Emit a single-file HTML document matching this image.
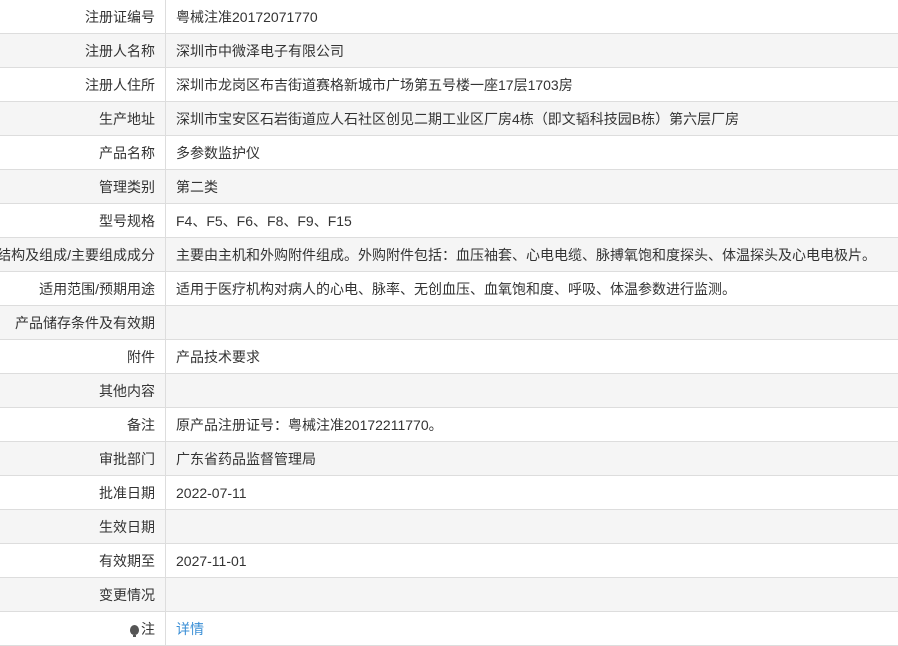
<!DOCTYPE html>
<html><head><meta charset="utf-8"><style>
body{margin:0;width:898px;height:645px;overflow:hidden;background:#fff;font-family:"Liberation Sans","Noto Sans CJK SC",sans-serif;font-size:14px;color:#333}
.t{position:absolute;top:0;left:0;width:898px}
.r{display:flex;height:33px;border-bottom:1px solid #ddd;line-height:35px}
.r:nth-child(even){background:#f5f5f5}
.l{width:166px;border-right:1px solid #ddd;box-sizing:border-box;padding-right:10px;display:flex;justify-content:flex-end;overflow:hidden;white-space:nowrap}
.v{padding-left:10px;white-space:nowrap;overflow:hidden}
a{color:#3b8fd6;text-decoration:none}
.b{display:inline-block;width:9px;height:10px;border-radius:50% 50% 45% 45%;background:#555;margin-right:2px;vertical-align:-1px;position:relative}
.b:after{content:"";position:absolute;left:3px;top:10px;width:3px;height:2px;background:#555}
</style></head><body><div class="t">
<div class="r"><div class="l">注册证编号</div><div class="v">粤械注准20172071770</div></div>
<div class="r"><div class="l">注册人名称</div><div class="v">深圳市中微泽电子有限公司</div></div>
<div class="r"><div class="l">注册人住所</div><div class="v">深圳市龙岗区布吉街道赛格新城市广场第五号楼一座17层1703房</div></div>
<div class="r"><div class="l">生产地址</div><div class="v">深圳市宝安区石岩街道应人石社区创见二期工业区厂房4栋（即文韬科技园B栋）第六层厂房</div></div>
<div class="r"><div class="l">产品名称</div><div class="v">多参数监护仪</div></div>
<div class="r"><div class="l">管理类别</div><div class="v">第二类</div></div>
<div class="r"><div class="l">型号规格</div><div class="v">F4、F5、F6、F8、F9、F15</div></div>
<div class="r"><div class="l"><span>结构及组成/主要组成成分</span></div><div class="v">主要由主机和外购附件组成。外购附件包括：血压袖套、心电电缆、脉搏氧饱和度探头、体温探头及心电电极片。</div></div>
<div class="r"><div class="l">适用范围/预期用途</div><div class="v">适用于医疗机构对病人的心电、脉率、无创血压、血氧饱和度、呼吸、体温参数进行监测。</div></div>
<div class="r"><div class="l">产品储存条件及有效期</div><div class="v"></div></div>
<div class="r"><div class="l">附件</div><div class="v">产品技术要求</div></div>
<div class="r"><div class="l">其他内容</div><div class="v"></div></div>
<div class="r"><div class="l">备注</div><div class="v">原产品注册证号：粤械注准20172211770。</div></div>
<div class="r"><div class="l">审批部门</div><div class="v">广东省药品监督管理局</div></div>
<div class="r"><div class="l">批准日期</div><div class="v">2022-07-11</div></div>
<div class="r"><div class="l">生效日期</div><div class="v"></div></div>
<div class="r"><div class="l">有效期至</div><div class="v">2027-11-01</div></div>
<div class="r"><div class="l">变更情况</div><div class="v"></div></div>
<div class="r"><div class="l"><span><i class="b"></i>注</span></div><div class="v"><a>详情</a></div></div>
</div></body></html>
